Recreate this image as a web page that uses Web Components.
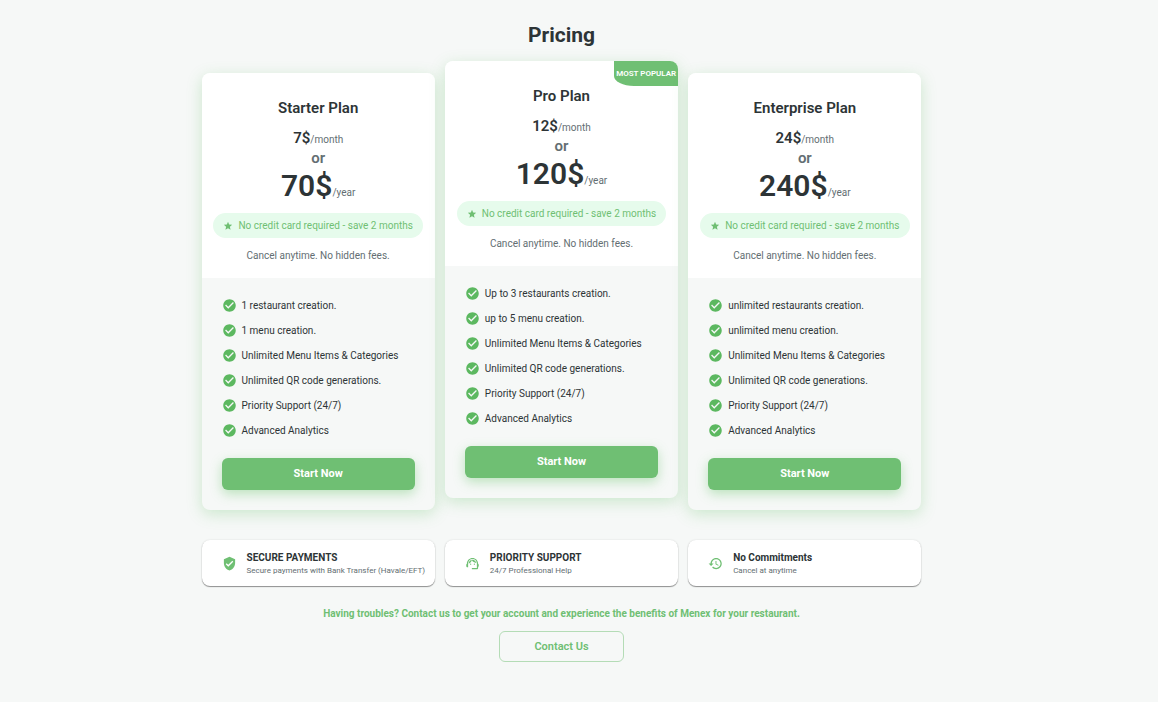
<!DOCTYPE html>
<html lang="en">
<head>
<meta charset="utf-8">
<meta name="viewport" content="width=device-width, initial-scale=1">
<title>Pricing</title>
<style>
  body {
    margin: 0;
    background: #f6f8f7;
    color: #2d3436;
    font-family: Roboto, "Liberation Sans", sans-serif;
    font-size: 10px;
    --green: #6fbf73;
    --muted: #636e72;
  }
</style>
</head>
<body>
<pricing-page>
  <plan-card name="Starter Plan" month="7$" year="70$">
    <plan-feature>1 restaurant creation.</plan-feature>
    <plan-feature>1 menu creation.</plan-feature>
    <plan-feature>Unlimited Menu Items &amp; Categories</plan-feature>
    <plan-feature>Unlimited QR code generations.</plan-feature>
    <plan-feature>Priority Support (24/7)</plan-feature>
    <plan-feature>Advanced Analytics</plan-feature>
  </plan-card>
  <plan-card name="Pro Plan" month="12$" year="120$" badge="MOST POPULAR">
    <plan-feature>Up to 3 restaurants creation.</plan-feature>
    <plan-feature>up to 5 menu creation.</plan-feature>
    <plan-feature>Unlimited Menu Items &amp; Categories</plan-feature>
    <plan-feature>Unlimited QR code generations.</plan-feature>
    <plan-feature>Priority Support (24/7)</plan-feature>
    <plan-feature>Advanced Analytics</plan-feature>
  </plan-card>
  <plan-card name="Enterprise Plan" month="24$" year="240$">
    <plan-feature>unlimited restaurants creation.</plan-feature>
    <plan-feature>unlimited menu creation.</plan-feature>
    <plan-feature>Unlimited Menu Items &amp; Categories</plan-feature>
    <plan-feature>Unlimited QR code generations.</plan-feature>
    <plan-feature>Priority Support (24/7)</plan-feature>
    <plan-feature>Advanced Analytics</plan-feature>
  </plan-card>
  <info-card slot="info" icon="shield"><span slot="title">SECURE PAYMENTS</span>Secure payments with Bank Transfer (Havale/EFT)</info-card>
  <info-card slot="info" icon="support"><span slot="title">PRIORITY SUPPORT</span>24/7 Professional Help</info-card>
  <info-card slot="info" icon="history"><span slot="title">No Commitments</span>Cancel at anytime</info-card>
  <contact-prompt slot="contact">Having troubles? Contact us to get your account and experience the benefits of Menex for your restaurant.</contact-prompt>
</pricing-page>

<script>
const ICONS = {
  star: '<path d="M12 17.27 18.18 21l-1.64-7.03L22 9.24l-7.19-.61L12 2 9.19 8.63 2 9.24l5.46 4.73L5.82 21z"/>',
  check: '<path d="M12 2C6.48 2 2 6.48 2 12s4.48 10 10 10 10-4.48 10-10S17.52 2 12 2zm-2 15-5-5 1.41-1.41L10 14.17l7.59-7.59L19 8l-9 9z"/>',
  shield: '<path d="M12 1 3 5v6c0 5.55 3.84 10.74 9 12 5.16-1.26 9-6.45 9-12V5l-9-4zm-2 16-4-4 1.41-1.41L10 14.17l6.59-6.59L18 9l-8 8z"/>',
  support: '<path d="M21 12.22C21 6.73 16.74 3 12 3c-4.69 0-9 3.65-9 9.28-.6.34-1 .98-1 1.72v2c0 1.1.9 2 2 2h1v-6.1c0-3.87 3.13-7 7-7s7 3.13 7 7V19h-8v2h8c1.1 0 2-.9 2-2v-1.22c.59-.31 1-.92 1-1.64v-2.3c0-.7-.41-1.31-1-1.62z"/><circle cx="9" cy="13" r="1"/><circle cx="15" cy="13" r="1"/><path d="M18 11.03C17.52 8.18 15.04 6 12.05 6c-3.03 0-6.29 2.51-6.03 6.45 2.47-1.01 4.33-3.21 4.86-5.89 1.31 2.63 4 4.44 7.12 4.47z"/>',
  history: '<path d="M13 3c-4.97 0-9 4.03-9 9H1l3.89 3.89.07.14L9 12H6c0-3.87 3.13-7 7-7s7 3.13 7 7-3.13 7-7 7c-1.93 0-3.68-.79-4.94-2.06l-1.42 1.42C8.27 19.99 10.51 21 13 21c4.97 0 9-4.03 9-9s-4.03-9-9-9zm-1 5v5l4.28 2.54.72-1.21-3.5-2.08V8H12z"/>'
};
const define = (name, render) => customElements.define(name, class extends HTMLElement {
  constructor() {
    super();
    this.attachShadow({ mode: 'open' });
  }
  connectedCallback() {
    this.shadowRoot.innerHTML = render(this);
  }
});

define('ui-icon', el => `
<style>
  :host { display: block; flex: none; width: 15px; height: 15px; }
  svg { display: block; width: 100%; height: 100%; fill: currentColor; }
</style>
<svg viewBox="0 0 24 24" aria-hidden="true">${ICONS[el.getAttribute('name')]}</svg>`);

define('plan-feature', () => `
<style>
  :host { display: flex; align-items: center; gap: 5px; height: 25px; }
  ui-icon { color: #5cb860; }
</style>
<ui-icon name="check"></ui-icon><span><slot></slot></span>`);

define('plan-card', el => {
  const badge = el.getAttribute('badge');
  return `
<style>
  :host {
    display: block; position: relative; overflow: hidden;
    border-radius: 8px; background: #f6f8f7;
    box-shadow: 0 4px 15px rgba(76, 185, 80, .25);
  }
  :host([badge]) { transform: translateY(-12px); }
  header {
    display: flex; flex-direction: column; align-items: center;
    padding: 20px 10px 15px; background: #fff; color: var(--muted);
  }
  h2 { margin: 0 0 5px; font-size: 15px; line-height: 30px; font-weight: 600; color: #2d3436; }
  p { margin: 0; white-space: nowrap; }
  strong { font-weight: 600; color: #2d3436; }
  .month, .or { height: 20px; line-height: 20px; }
  .month strong { font-size: 15px; }
  .or { font-size: 15px; font-weight: 600; }
  .year { height: 35px; line-height: 35px; }
  .year strong { font-size: 30px; }
  .perk {
    display: flex; align-items: center; gap: 5px; height: 25px;
    margin: 10px 0; padding: 0 10px; border-radius: 13px;
    background: #e6fbec; color: var(--green);
  }
  .perk ui-icon { width: 10px; height: 10px; }
  .note { line-height: 15px; }
  .body { padding: 15px 20px 20px; }
  button {
    display: block; width: 100%; height: 32px; margin-top: 15px; padding: 0 0 2px;
    border: 0; border-radius: 6px; background: var(--green); color: #fff;
    font: 700 11px Roboto, "Liberation Sans", sans-serif; cursor: pointer;
    box-shadow: 0 4px 12px rgba(76, 185, 80, .35);
  }
  .badge {
    position: absolute; top: 0; right: 0; padding: 0 2px;
    background: var(--green); color: #fff; border-bottom-left-radius: 20px 10px;
    font-size: 8px; line-height: 25px; font-weight: 600;
  }
</style>
${badge ? `<span class="badge">${badge}</span>` : ''}
<header>
  <h2>${el.getAttribute('name')}</h2>
  <p class="month"><strong>${el.getAttribute('month')}</strong>/month</p>
  <p class="or">or</p>
  <p class="year"><strong>${el.getAttribute('year')}</strong>/year</p>
  <p class="perk"><ui-icon name="star"></ui-icon><span>No credit card required - save 2 months</span></p>
  <p class="note">Cancel anytime. No hidden fees.</p>
</header>
<div class="body">
  <slot></slot>
  <button type="button">Start Now</button>
</div>`;
});

define('info-card', el => `
<style>
  :host {
    display: flex; align-items: center; gap: 10px; height: 46px; padding: 0 20px;
    box-sizing: border-box; border-radius: 8px; background: #fff;
    box-shadow: 0 1px 1px rgba(0, 0, 0, .4), 0 0 2px rgba(0, 0, 0, .12);
  }
  ui-icon { color: var(--green); }
  .title { font-weight: 700; line-height: 14px; }
  .sub { font-size: 8px; line-height: 11px; color: var(--muted); white-space: nowrap; }
</style>
<ui-icon name="${el.getAttribute('icon')}"></ui-icon>
<div>
  <div class="title"><slot name="title"></slot></div>
  <div class="sub"><slot></slot></div>
</div>`);

define('contact-prompt', () => `
<style>
  :host { display: flex; flex-direction: column; align-items: center; gap: 10px; color: var(--green); }
  p { margin: 0; font-weight: 700; line-height: 15px; text-align: center; }
  button {
    width: 125px; height: 31px; padding: 0; border: 1px solid #b4dcb6; border-radius: 6px;
    background: transparent; color: var(--green);
    font: 600 11px Roboto, "Liberation Sans", sans-serif; cursor: pointer;
  }
</style>
<p><slot></slot></p>
<button type="button">Contact Us</button>`);

define('pricing-page', () => `
<style>
  :host { display: block; padding: 20px 35px 40px 0; }
  main { max-width: 720px; margin: 0 auto; }
  h1 { margin: 0 0 23px; font-size: 21px; line-height: 30px; font-weight: 700; text-align: center; }
  .row { display: grid; grid-template-columns: repeat(3, minmax(0, 1fr)); gap: 10px; }
  .info { margin: 30px 0 20px; }
</style>
<main>
  <h1>Pricing</h1>
  <section class="row"><slot></slot></section>
  <section class="row info"><slot name="info"></slot></section>
  <slot name="contact"></slot>
</main>`);
</script>
</body>
</html>
